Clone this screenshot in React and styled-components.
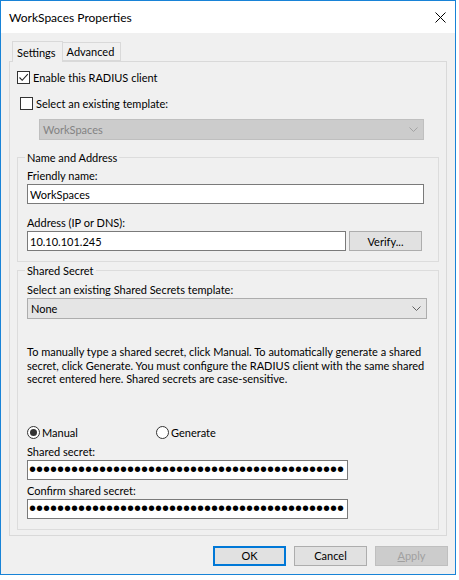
import React from "react";
import styled, { createGlobalStyle } from "styled-components";

const GlobalStyle = createGlobalStyle`
  html, body {
    margin: 0;
    padding: 0;
    background: #fff;
  }
  body {
    font-family: Lato, "Liberation Sans", sans-serif;
    font-size: 11px;
    color: #000;
  }
  * {
    box-sizing: border-box;
  }
`;

const Window = styled.div`
  width: 456px;
  height: 575px;
  border: 1px solid #1883d7;
  background: #f0f0f0;
  display: flex;
  flex-direction: column;
`;

const TitleBar = styled.div`
  height: 32px;
  flex-shrink: 0;
  background: #fff;
  display: flex;
  align-items: center;
  justify-content: space-between;
  padding: 0 9px 0 8px;
`;

const Title = styled.span`
  font-size: 12px;
`;

const CloseIcon = styled.svg`
  width: 11px;
  height: 11px;
  display: block;
`;

const Body = styled.div`
  padding: 8px 8px 0 8px;
`;

const TabStrip = styled.div`
  height: 20px;
  display: flex;
  align-items: flex-end;
  padding-left: 3px;
`;

const Tab = styled.div`
  position: relative;
  display: flex;
  align-items: center;
  height: ${(p) => (p.$active ? "21px" : "19px")};
  margin-bottom: ${(p) => (p.$active ? "-1px" : "0")};
  padding: 0 6px 0 4px;
  border: 1px solid #d9d9d9;
  border-bottom: ${(p) => (p.$active ? "none" : "1px solid #d9d9d9")};
  background: #f0f0f0;
  z-index: ${(p) => (p.$active ? 1 : 0)};
  ${(p) => (p.$active ? "" : "border-left: none;")}
`;

const Panel = styled.div`
  border: 1px solid #d9d9d9;
  padding: 8px 7px 5px 7px;
  display: flex;
  flex-direction: column;
`;

const CheckRow = styled.label`
  display: flex;
  align-items: center;
  height: 15px;
  gap: 3px;
  margin-left: ${(p) => p.$indent || 0}px;
  margin-top: ${(p) => p.$top || 0}px;
`;

const Box = styled.span`
  width: 13px;
  height: 13px;
  border: 1px solid #333;
  background: #fff;
  display: flex;
  align-items: center;
  justify-content: center;
`;

const Combo = styled.div`
  width: ${(p) => p.$width}px;
  height: 21px;
  margin-left: ${(p) => p.$indent || 0}px;
  margin-top: ${(p) => p.$top || 0}px;
  display: flex;
  align-items: center;
  justify-content: space-between;
  padding: 0 5px 0 3px;
  border: 1px solid ${(p) => (p.$disabled ? "#bfbfbf" : "#adadad")};
  background: ${(p) => (p.$disabled ? "#cccccc" : "#e5e5e5")};
  color: ${(p) => (p.$disabled ? "#838383" : "#000")};
`;

const Chevron = styled.svg`
  width: 9px;
  height: 5px;
  display: block;
`;

const Group = styled.fieldset`
  margin: ${(p) => p.$top || 0}px 0 0 0;
  padding: 0 14px 10px 9px;
  border: 1px solid #dcdcdc;
  min-width: 0;
`;

const Legend = styled.legend`
  padding: 0 2px;
  margin-left: -2px;
  line-height: 15px;
  font-size: 11px;
`;

const FieldLabel = styled.div`
  height: 15px;
  line-height: 15px;
  margin-top: ${(p) => p.$top || 0}px;
  margin-bottom: 1px;
`;

const TextBox = styled.input`
  display: block;
  width: ${(p) => p.$width}px;
  height: 20px;
  margin: 0;
  padding: 0 2px;
  border: 1px solid #7a7a7a;
  background: #fff;
  font-family: Lato, "Liberation Sans", sans-serif;
  font-size: 11px;
  color: #000;
  outline: none;
`;

const SecretBox = styled(TextBox)`
  font-family: "Liberation Sans", sans-serif;
  font-size: 20px;
  padding: 0 1px;
  letter-spacing: 0;
`;

const InputRow = styled.div`
  display: flex;
  gap: 3px;
`;

const Button = styled.button`
  width: ${(p) => p.$width || 73}px;
  height: 20px;
  margin: 0;
  padding: 0;
  font-family: Lato, "Liberation Sans", sans-serif;
  font-size: 11px;
  color: ${(p) => (p.disabled ? "#a0a0a0" : "#000")};
  background: ${(p) => (p.disabled ? "#cccccc" : "#e1e1e1")};
  border: ${(p) =>
    p.$default ? "2px solid #0078d7" : p.disabled ? "1px solid #bfbfbf" : "1px solid #adadad"};
`;

const Note = styled.p`
  margin: 26px 0 0 0;
  line-height: 13.5px;
  white-space: nowrap;
`;

const RadioRow = styled.div`
  display: flex;
  margin-top: 39px;
  height: 15px;
`;

const RadioOption = styled.label`
  width: 129px;
  display: flex;
  align-items: center;
  gap: 2px;
`;

const RadioDot = styled.span`
  width: 13px;
  height: 13px;
  border-radius: 50%;
  border: 1px solid #333;
  background: #fff;
  display: flex;
  align-items: center;
  justify-content: center;
  &::after {
    content: "";
    width: 7px;
    height: 7px;
    border-radius: 50%;
    background: ${(p) => (p.$on ? "#333" : "transparent")};
  }
`;

const Footer = styled.div`
  flex: 1;
  display: flex;
  justify-content: flex-end;
  align-items: flex-start;
  gap: 8px;
  padding: 10px 7px 0 0;
`;

const CheckBox = ({ checked }) => (
  <Box>
    {checked && (
      <svg width="11" height="11" viewBox="0 0 11 11">
        <path d="M1.5 5.5 L4.2 8.3 L9.8 2.2" fill="none" stroke="#222" strokeWidth="1.1" />
      </svg>
    )}
  </Box>
);

const DropDown = ({ value, width, indent, top, disabled }) => (
  <Combo $width={width} $indent={indent} $top={top} $disabled={disabled}>
    <span>{value}</span>
    <Chevron viewBox="0 0 9 5">
      <path d="M0.5 0.5 L4.5 4.5 L8.5 0.5" fill="none" stroke={disabled ? "#a3a3a3" : "#606060"} strokeWidth="1" />
    </Chevron>
  </Combo>
);

const secret = "x".repeat(45);

export default function App() {
  return (
    <>
      <GlobalStyle />
      <Window>
        <TitleBar>
          <Title>WorkSpaces Properties</Title>
          <CloseIcon viewBox="0 0 11 11">
            <path d="M0.5 0.5 L10.5 10.5 M10.5 0.5 L0.5 10.5" stroke="#000" strokeWidth="1" />
          </CloseIcon>
        </TitleBar>
        <Body>
          <TabStrip>
            <Tab $active>Settings</Tab>
            <Tab>Advanced</Tab>
          </TabStrip>
          <Panel>
            <CheckRow>
              <CheckBox checked />
              Enable this RADIUS client
            </CheckRow>
            <CheckRow $indent={3} $top={11}>
              <CheckBox />
              Select an existing template:
            </CheckRow>
            <DropDown value="WorkSpaces" width={385} indent={22} top={8} disabled />

            <Group $top={10}>
              <Legend>Name and Address</Legend>
              <FieldLabel $top={3}>Friendly name:</FieldLabel>
              <TextBox $width={397} readOnly value="WorkSpaces" />
              <FieldLabel $top={11}>Address (IP or DNS):</FieldLabel>
              <InputRow>
                <TextBox $width={319} readOnly value="10.10.101.245" />
                <Button $width={73}>Verify...</Button>
              </InputRow>
            </Group>

            <Group $top={1}>
              <Legend>Shared Secret</Legend>
              <FieldLabel $top={4}>Select an existing Shared Secrets template:</FieldLabel>
              <DropDown value="None" width={400} top={1} />
              <Note>
                To manually type a shared secret, click Manual. To automatically generate a shared
                <br />
                secret, click Generate. You must configure the RADIUS client with the same shared
                <br />
                secret entered here. Shared secrets are case-sensitive.
              </Note>
              <RadioRow>
                <RadioOption>
                  <RadioDot $on />
                  Manual
                </RadioOption>
                <RadioOption>
                  <RadioDot />
                  Generate
                </RadioOption>
              </RadioRow>
              <FieldLabel $top={4}>Shared secret:</FieldLabel>
              <SecretBox type="password" $width={321} readOnly value={secret} />
              <FieldLabel $top={3}>Confirm shared secret:</FieldLabel>
              <SecretBox type="password" $width={321} readOnly value={secret} />
            </Group>
          </Panel>
        </Body>
        <Footer>
          <Button $default>OK</Button>
          <Button>Cancel</Button>
          <Button disabled>
            <u>A</u>pply
          </Button>
        </Footer>
      </Window>
    </>
  );
}
